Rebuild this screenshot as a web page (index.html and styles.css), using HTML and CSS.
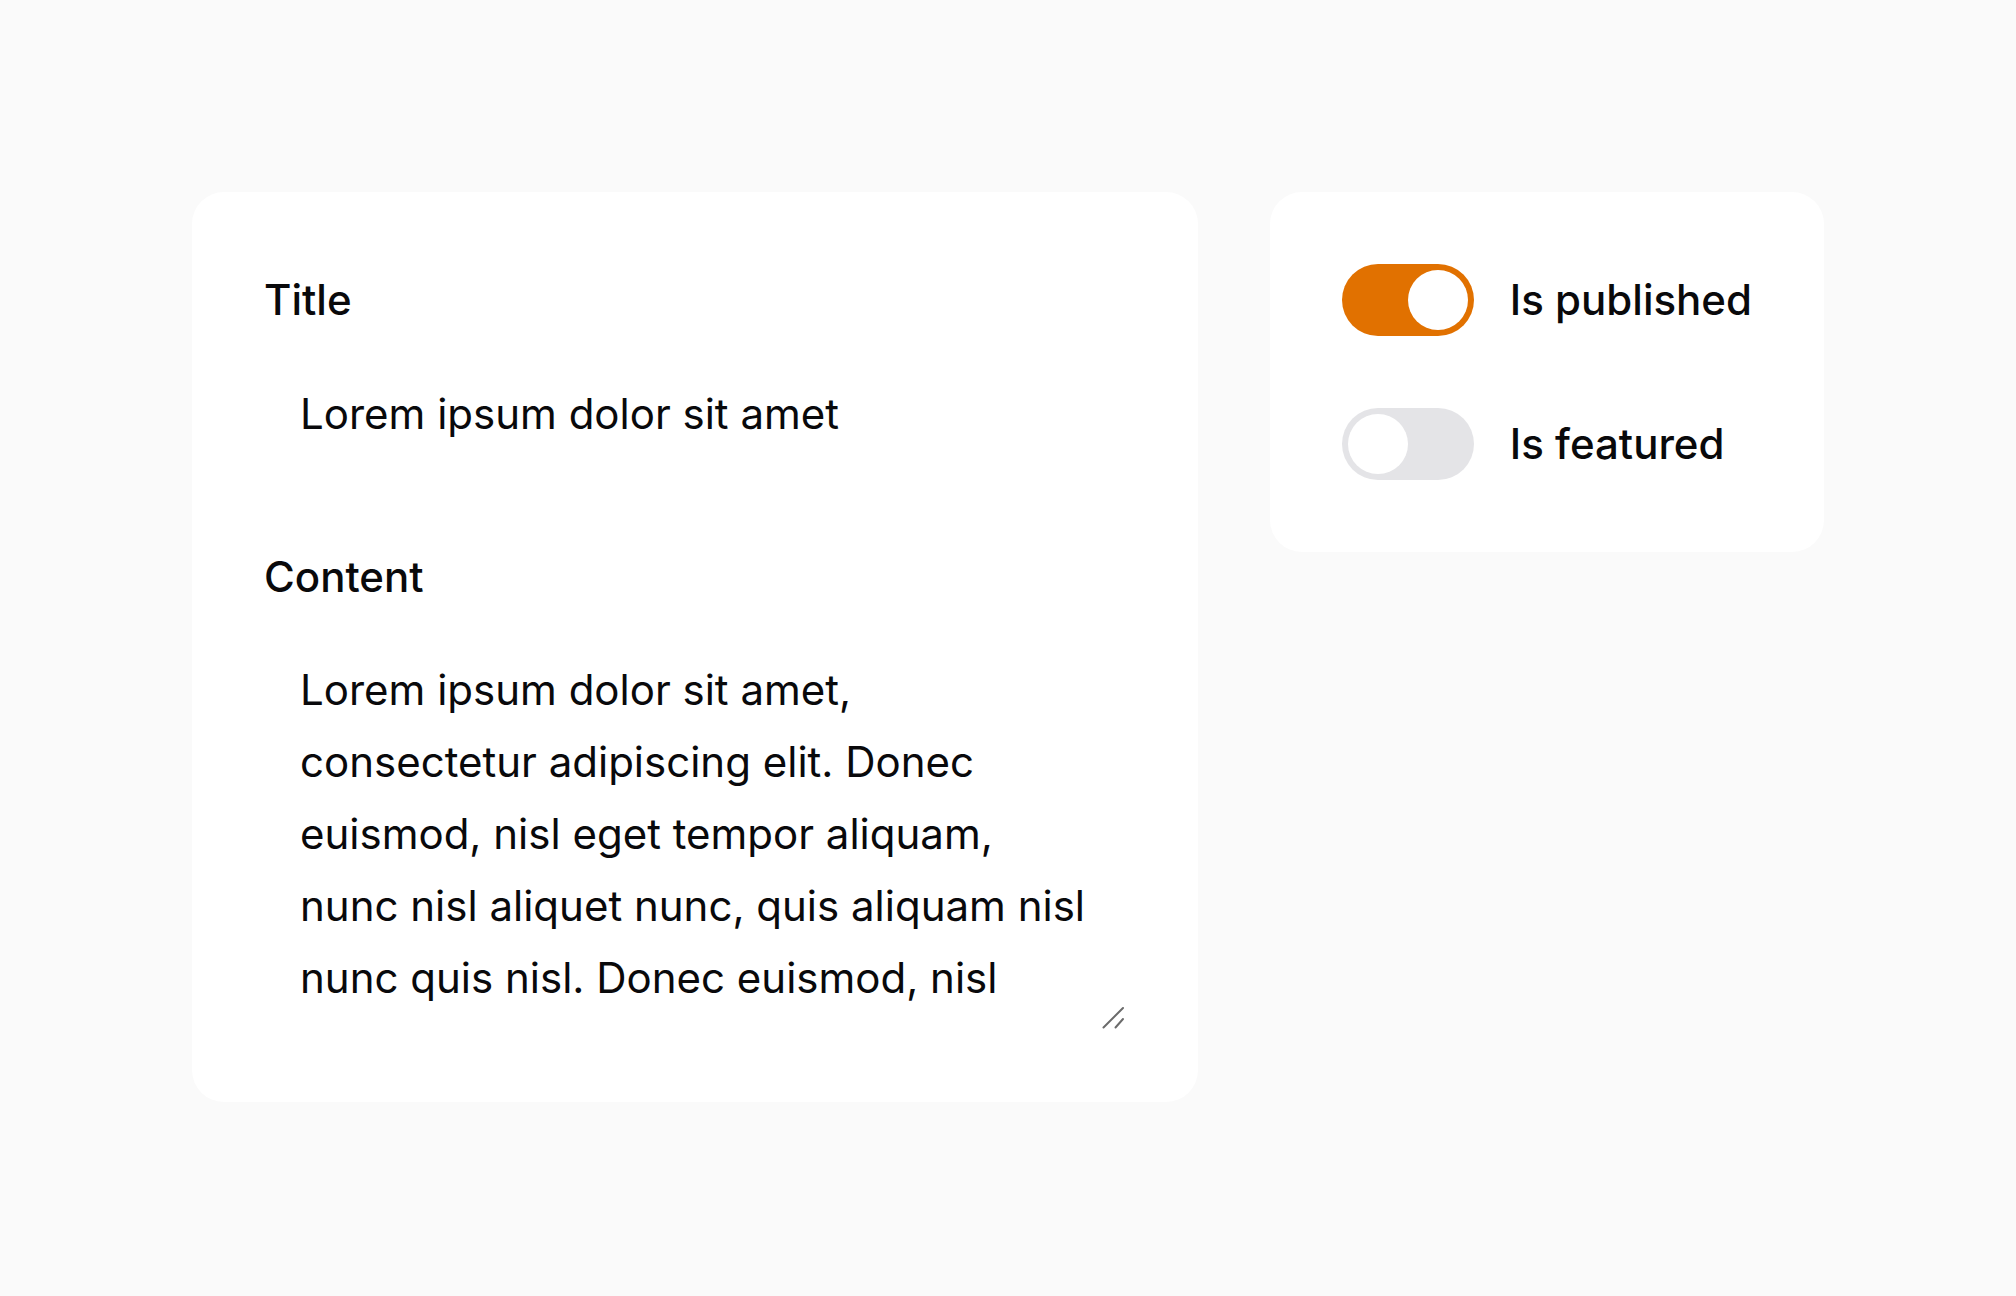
FILE: index.html
```html
<!DOCTYPE html>
<html lang="en">
<head>
<meta charset="utf-8">
<title>Post form</title>
<link rel="stylesheet" href="styles.css">
</head>
<body>
<main class="page">
  <section class="card card-main">
    <div class="field">
      <label class="field-label" for="title">Title</label>
      <input class="control" id="title" type="text" value="Lorem ipsum dolor sit amet">
    </div>
    <div class="field field-content">
      <label class="field-label" for="content">Content</label>
      <div class="textarea-wrap">
        <textarea class="control control-area" id="content" rows="5">Lorem ipsum dolor sit amet,
consectetur adipiscing elit. Donec
euismod, nisl eget tempor aliquam,
nunc nisl aliquet nunc, quis aliquam nisl
nunc quis nisl. Donec euismod, nisl</textarea>
        <svg class="resize-handle" width="24" height="24" viewBox="0 0 24 24" aria-hidden="true">
          <line x1="2.5" y1="21.5" x2="22" y2="2" />
          <line x1="14.5" y1="21.5" x2="22" y2="13" />
        </svg>
      </div>
    </div>
  </section>
  <section class="card card-side">
    <div class="switch-row">
      <span class="switch switch-on" role="switch" aria-checked="true"><span class="knob"></span></span>
      <span class="switch-label">Is published</span>
    </div>
    <div class="switch-row">
      <span class="switch" role="switch" aria-checked="false"><span class="knob"></span></span>
      <span class="switch-label">Is featured</span>
    </div>
  </section>
</main>
</body>
</html>
```
FILE: styles.css
```css
* { box-sizing: border-box; }

html, body {
  margin: 0;
  padding: 0;
}

body {
  background: #fafafa;
  font-family: Inter, "Noto Sans", "Liberation Sans", sans-serif;
  color: #09090b;
}

.page {
  display: flex;
  align-items: flex-start;
  gap: 72px;
  padding: 192px;
}

.card {
  background: #ffffff;
  border-radius: 32px;
  padding: 72px;
}

.card-main {
  width: 1007px;
  display: flex;
  flex-direction: column;
  gap: 76px;
}

.field {
  display: flex;
  flex-direction: column;
  gap: 25px;
}

.field-label {
  font-size: 42px;
  line-height: 72px;
  font-weight: 500;
}

.control {
  display: block;
  width: 100%;
  border: none;
  outline: none;
  background: transparent;
  font-family: inherit;
  font-size: 42px;
  line-height: 72px;
  font-weight: 400;
  color: #09090b;
  padding: 16px 36px;
  margin: 0;
  height: 104px;
}

.textarea-wrap {
  position: relative;
}

.control-area {
  height: 392px;
  padding-right: 8px;
  resize: none;
  overflow: hidden;
}

.resize-handle {
  position: absolute;
  right: 1px;
  bottom: 0;
  stroke: #6b6b6b;
  stroke-width: 2;
  stroke-linecap: round;
}

.card-side {
  display: flex;
  flex-direction: column;
  gap: 72px;
}

.switch-row {
  display: flex;
  align-items: center;
  gap: 36px;
}

.switch {
  width: 132px;
  height: 72px;
  border-radius: 36px;
  padding: 6px;
  background: #e4e4e7;
  display: flex;
  justify-content: flex-start;
  flex: none;
}

.switch-on {
  background: #e17100;
  justify-content: flex-end;
}

.knob {
  width: 60px;
  height: 60px;
  border-radius: 50%;
  background: #ffffff;
}

.switch-label {
  font-size: 42px;
  line-height: 72px;
  font-weight: 500;
  white-space: nowrap;
}
```
